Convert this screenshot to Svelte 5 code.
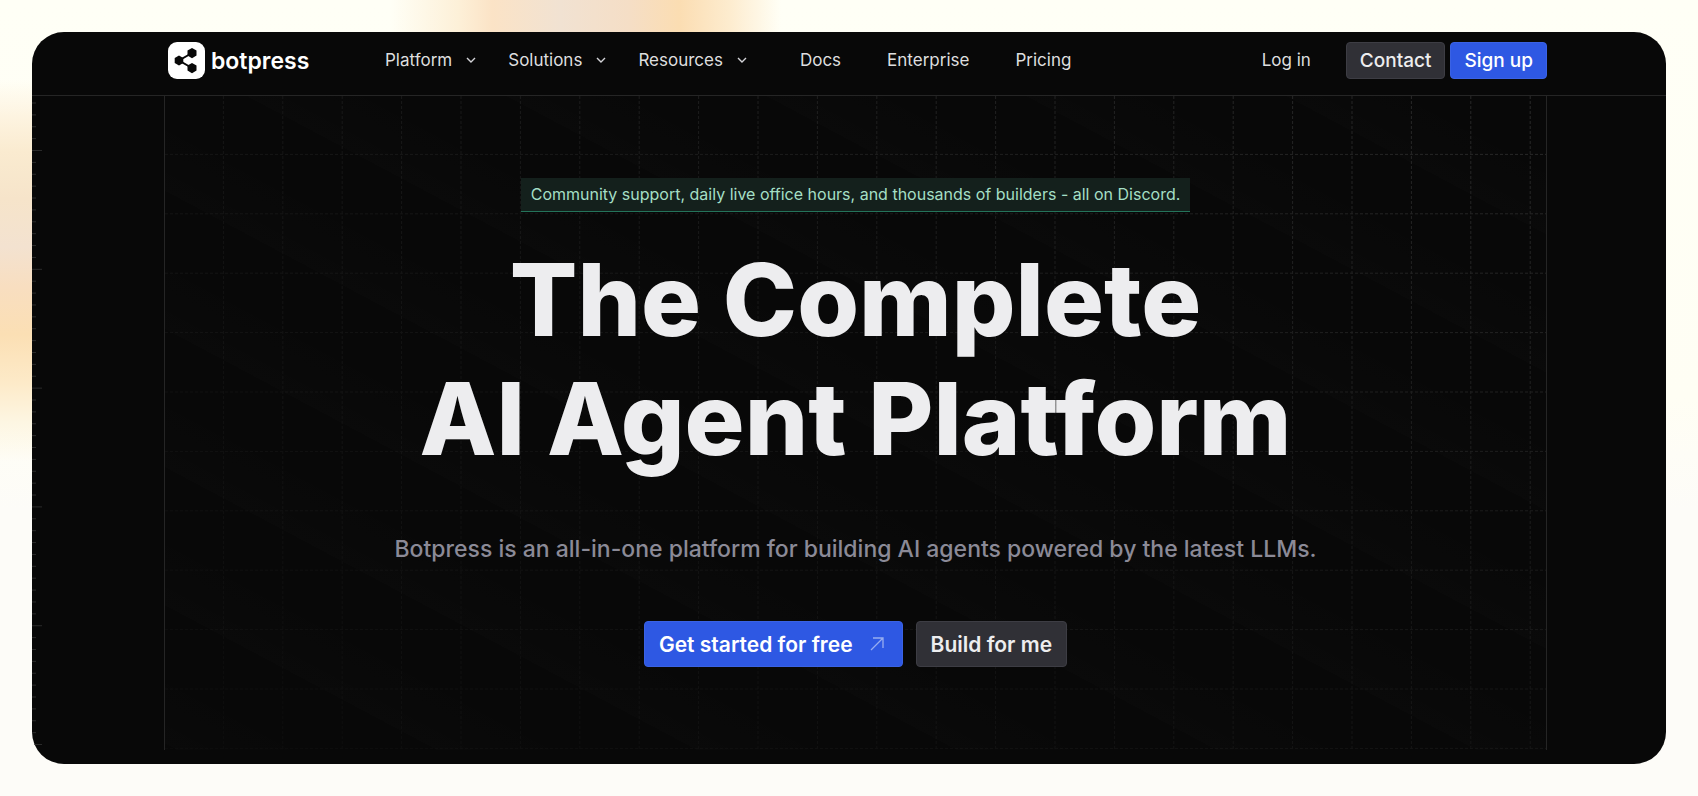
<script>
  const menus = ['Platform', 'Solutions', 'Resources'];
  const links = ['Docs', 'Enterprise', 'Pricing'];

  // background grid: dashed lines every `cell` px, ruler ticks five to a cell
  const cell = 59.4;
  const cols = Array.from({ length: 40 }, (_, i) => (i + 1) * cell - 1);
  const rows = Array.from({ length: 20 }, (_, i) => (i + 1) * cell - 1);
  const ticks = Array.from({ length: 100 }, (_, i) => ({
    y: 7 + (i * cell) / 5,
    long: i % 10 === 4
  }));
</script>

<div class="page">
  <div class="card">
    <header>
      <div class="bar">
        <a class="logo" href="/">
          <svg width="37" height="37" viewBox="0 0 37 37" aria-hidden="true">
            <rect width="37" height="37" rx="9" fill="#fff" />
            <path d="M24 11L11 18.500L24 26" fill="none" stroke="#080808" stroke-width="2" />
            <g fill="#080808">
              <path d="M24 6l4.500 2.600v5l-4.500 2.600l-4.500-2.600v-5z" />
              <path d="M11 13.500l4.300 2.500v5l-4.300 2.500l-4.300-2.500v-5z" />
              <path d="M24 21l4.500 2.600v5l-4.500 2.600l-4.500-2.600v-5z" />
            </g>
          </svg>
          <span>botpress</span>
        </a>

        <nav>
          <div class="menus">
            {#each menus as menu}
              <button class="menu">
                {menu}
                <svg width="10" height="6" viewBox="0 0 10 6" fill="none" aria-hidden="true">
                  <path d="M1 1L5 5L9 1" stroke="#d4d4d8" stroke-width="1.400" />
                </svg>
              </button>
            {/each}
          </div>
          <div class="links">
            {#each links as link}
              <a href="/{link.toLowerCase()}">{link}</a>
            {/each}
          </div>
        </nav>

        <div class="account">
          <a href="/login">Log in</a>
          <button class="btn grey">Contact</button>
          <button class="btn blue">Sign up</button>
        </div>
      </div>
    </header>

    <main>
      <svg class="ruler" width="10" height="100%" aria-hidden="true">
        {#each ticks as tick}
          <line x1="0" x2={tick.long ? 10 : 4} y1={tick.y} y2={tick.y} stroke="#2b2b2b" />
        {/each}
      </svg>

      <section class="hero">
        <svg class="grid" width="100%" height="100%" aria-hidden="true">
          {#each cols as x}
            <line x1={x} x2={x} y1="0" y2="100%" />
          {/each}
          {#each rows as y}
            <line x1="0" x2="100%" y1={y} y2={y} />
          {/each}
        </svg>

        <a class="badge" href="/discord">Community support, daily live office hours, and thousands of builders - all on Discord.</a>
        <h1>The Complete<br />AI Agent Platform</h1>
        <p>Botpress is an all-in-one platform for building AI agents powered by the latest LLMs.</p>
        <div class="actions">
          <button class="btn blue large">
            Get started for free
            <svg width="18" height="14" viewBox="0 0 18 14" fill="none" aria-hidden="true">
              <path d="M1 13L13 1M3 1H13V11" stroke="#97adf0" stroke-width="1.300" />
            </svg>
          </button>
          <button class="btn grey large">Build for me</button>
        </div>
      </section>
    </main>
  </div>
</div>

<style>
  :global(body) {
    margin: 0;
  }

  .page {
    box-sizing: border-box;
    min-height: 100vh;
    padding: 32px;
    display: flex;
    font-family: Inter, sans-serif;
    font-variant-ligatures: none;
    background:
      linear-gradient(to right, transparent 23%, #fdf0d8 27%, #fbe3c6 29%, #f1e2d2 33%, #f5dec6 37%, #fbddb2 40%, #fdeccf 43%, transparent 46%) top / 100% 32px no-repeat,
      linear-gradient(transparent 10%, #fdf3df 15%, #faebd0 19%, #f6e4ca 25%, #f3e2d0 31%, #f8dec0 36%, #fbdfb4 42%, #fdeac8 48%, #fdf6e2 53%, transparent 58%) left / 32px 100% no-repeat,
      linear-gradient(#fffff6, #fffef4 50%, #fdfcf8 64%);
  }

  .card {
    flex: 1;
    display: flex;
    flex-direction: column;
    background: #080808;
    border-radius: 32px;
    overflow: hidden;
  }

  header {
    border-bottom: 1px solid #252525;
  }

  .bar {
    display: flex;
    align-items: center;
    height: 37px;
    margin: 0 119px 0 136px;
    padding: 10px 0 16px;
  }

  a {
    color: inherit;
    text-decoration: none;
  }

  button {
    font: inherit;
    color: inherit;
    background: none;
    border: 0;
    padding: 0;
    cursor: pointer;
  }

  .logo {
    display: flex;
    align-items: center;
    gap: 6px;
    width: 217px;
    color: #fff;
    font-size: 23px;
    font-weight: 600;
    line-height: 32px;
  }

  nav {
    flex: 1;
    display: flex;
    gap: 53px;
    color: #dededf;
    font-size: 17px;
    line-height: 20px;
    padding-bottom: 2px;
  }

  .menus {
    display: flex;
    gap: 32px;
  }

  .menu {
    display: flex;
    align-items: center;
    gap: 14px;
  }

  .links {
    display: flex;
    gap: 46px;
  }

  .account {
    display: flex;
    align-items: center;
    gap: 5px;
    color: #dededf;
    font-size: 17px;
    line-height: 20px;
  }

  .account a {
    margin-right: 30px;
    padding-bottom: 2px;
  }

  .btn {
    box-sizing: border-box;
    height: 37px;
    padding: 0 13px;
    border: 1px solid;
    border-radius: 4px;
    font-size: 19px;
    font-weight: 500;
    white-space: nowrap;
  }

  .blue {
    background: #2e58e3;
    border-color: #3a62e4;
    color: #fff;
  }

  .grey {
    background: #303036;
    border-color: #3d3d44;
    color: #ededef;
  }

  main {
    flex: 1;
    position: relative;
    display: flex;
    padding: 0 119px 14px 132px;
  }

  .ruler {
    position: absolute;
    left: 0;
    top: 0;
  }

  .hero {
    position: relative;
    flex: 1;
    display: flex;
    flex-direction: column;
    align-items: center;
    border: solid #252525;
    border-width: 0 1px;
    padding-top: 82px;
    background: repeating-linear-gradient(208deg, transparent 0, transparent 50px, rgba(255, 255, 255, 0.006) 122px);
  }

  .grid {
    position: absolute;
    inset: 0;
    stroke: #2a2a2a;
    stroke-dasharray: 3 2;
    mask-image: linear-gradient(to top right, rgba(0, 0, 0, 0.15), rgba(0, 0, 0, 0.4) 50%, #000);
  }

  .badge,
  h1,
  p,
  .actions {
    position: relative;
  }

  .badge {
    padding: 0 10px;
    border-bottom: 1px solid #24735a;
    background: #14201c;
    color: #a4dfc5;
    font-size: 16px;
    line-height: 33px;
  }

  h1 {
    margin: 28px 0 0;
    color: #ededef;
    font-size: 100px;
    font-weight: 800;
    line-height: 119px;
    text-align: center;
  }

  p {
    margin: 54px 0 0;
    color: #8b8a97;
    font-size: 23px;
    font-weight: 500;
    line-height: 34px;
  }

  .actions {
    display: flex;
    gap: 13px;
    margin-top: 55px;
  }

  .large {
    display: flex;
    align-items: center;
    gap: 17px;
    height: 46px;
    padding: 0 14px;
    font-size: 21px;
    font-weight: 600;
  }
</style>
